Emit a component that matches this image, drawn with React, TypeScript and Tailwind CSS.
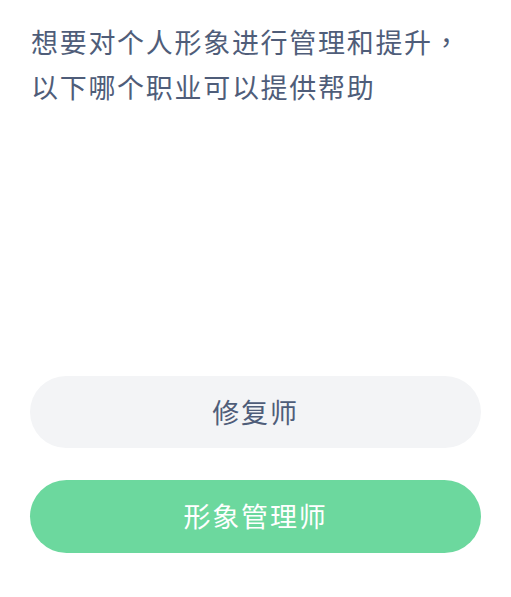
export default function App() {
  const options = [
    { label: '修复师', correct: false },
    { label: '形象管理师', correct: true },
  ];

  return (
    <div
      className="w-[511px] h-[597px] bg-white overflow-hidden"
      style={{ fontFamily: '"Noto Sans CJK SC", "Noto Sans", sans-serif' }}
    >
      {/* Question */}
      <div className="pt-[19px] pl-[31px] pr-[10px] h-[376px]">
        <p className="text-[27px] leading-[45px] tracking-[1.7px] text-[#4f5d79]">
          想要对个人形象进行管理和提升
          <span style={{ fontFamily: '"Noto Sans CJK TC", sans-serif' }}>，</span>
          <br />
          以下哪个职业可以提供帮助
        </p>
      </div>

      {/* Options */}
      <div className="flex flex-col gap-[32px] px-[30px]">
        {options.map((o) => (
          <div
            key={o.label}
            className={
              o.correct
                ? 'h-[73px] rounded-full bg-[#6cd89e] flex items-center justify-center text-[27px] tracking-[1.8px] text-white'
                : 'h-[72px] rounded-full bg-[#f3f4f6] flex items-center justify-center text-[27px] tracking-[1.8px] text-[#4f5d79]'
            }
          >
            {o.label}
          </div>
        ))}
      </div>
    </div>
  );
}
